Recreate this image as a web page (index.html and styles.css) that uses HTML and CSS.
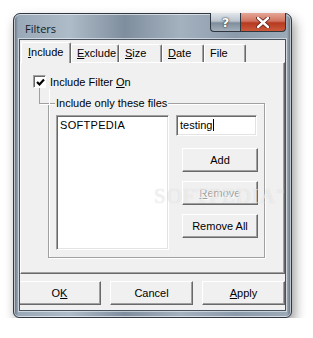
FILE: index.html
```html
<!DOCTYPE html>
<html lang="en">
<head>
    <meta charset="UTF-8">
    <title>Filters</title>
    <link rel="stylesheet" href="styles.css">
</head>
<body>
    <div class="window">
        <div class="titlebar">
            <div class="title">Filters</div>
            <div class="caption_btns">
                <div class="cap_btn help">?</div>
                <div class="cap_btn close">
                    <svg width="14" height="11" viewBox="0 0 14 11">
                        <path d="M2 1 L12 10 M12 1 L2 10" stroke="#5a1a10" stroke-width="4" stroke-linecap="round"/>
                        <path d="M2 1 L12 10 M12 1 L2 10" stroke="#fff" stroke-width="2.4" stroke-linecap="round"/>
                    </svg>
                </div>
            </div>
        </div>
        <div class="client">
            <div class="tabs">
                <div class="tab active" style="width: 50px"><u>I</u>nclude</div>
                <div class="tab" style="width: 48px"><u>E</u>xclude</div>
                <div class="tab" style="width: 43px"><u>S</u>ize</div>
                <div class="tab" style="width: 42px"><u>D</u>ate</div>
                <div class="tab" style="width: 42px">File</div>
            </div>
            <div class="tab_panel">
                <div class="check_row">
                    <span class="checkbox">
                        <svg width="9" height="9" viewBox="0 0 9 9">
                            <path d="M1 4 L3.5 6.5 L8 1.5" fill="none" stroke="#000" stroke-width="2.2"/>
                        </svg>
                    </span>
                    <span>Include Filter <u>O</u>n</span>
                </div>
                <div class="group">
                    <span class="group_label">Include only these files</span>
                    <div class="listbox">SOFTPEDIA</div>
                    <div class="side">
                        <div class="textbox">testing<span class="caret"></span></div>
                        <button class="btn side_btn" type="button">Add</button>
                        <button class="btn side_btn disabled" type="button"><u>R</u>emove</button>
                        <button class="btn side_btn" type="button">Remove All</button>
                    </div>
                </div>
            </div>
            <div class="bottom_btns">
                <button class="btn dlg_btn" type="button">O<u>K</u></button>
                <button class="btn dlg_btn" type="button">Cancel</button>
                <button class="btn dlg_btn" type="button"><u>A</u>pply</button>
            </div>
            <div class="watermark">SOFTPEDIA<sup>&trade;</sup></div>
        </div>
    </div>
</body>
</html>
```

FILE: styles.css
```css
body {
    margin: 0;
    background-color: #fff;
    font-family: "Liberation Sans", Arial, sans-serif;
    font-size: 11px;
    color: #000;
}
u {
    text-decoration: underline;
    text-underline-offset: 1px;
}

/* window frame */
.window {
    box-sizing: border-box;
    width: 279px;
    height: 305px;
    margin: 13px 0 0 13px;
    padding: 0 5px 6px 5px;
    border: 1px solid #2f3842;
    border-radius: 7px 7px 6px 6px;
    display: flex;
    flex-direction: column;
    background:
        linear-gradient(90deg, rgba(50, 62, 76, 0.6) 0px, rgba(50, 62, 76, 0) 4px, rgba(50, 62, 76, 0) calc(100% - 4px), rgba(50, 62, 76, 0.6) 100%),
        linear-gradient(90deg, #98a7b6 0%, #aebbc8 20%, #7f8e9e 40%, #a4b1bf 60%, #8c9bab 80%, #9dabb9 100%);
    box-shadow: 3px 6px 12px rgba(0, 0, 0, 0.4), inset 0 0 0 1px rgba(255, 255, 255, 0.6);
}
.titlebar {
    height: 25px;
    display: flex;
    align-items: flex-start;
}
.title {
    flex: 1;
    padding: 7px 0 0 6px;
    font-family: "Open Sans", sans-serif;
    font-size: 11px;
    color: #0f1c28;
}
.caption_btns {
    display: flex;
    margin-top: -1px;
}
.cap_btn {
    box-sizing: border-box;
    height: 19px;
    border: 1px solid #2e363f;
    border-top: 0;
    display: flex;
    align-items: center;
    justify-content: center;
}
.help {
    width: 30px;
    border-radius: 0 0 0 4px;
    border-right: 0;
    background: linear-gradient(180deg, #e1e6eb 0%, #bcc5ce 45%, #7f8d9b 55%, #a3afbb 100%);
    color: #fff;
    font-family: "DejaVu Sans", sans-serif;
    font-weight: bold;
    font-size: 13px;
    text-shadow: 0 0 2px #2b333b, 0 0 1px #2b333b;
}
.close {
    width: 46px;
    border-radius: 0 0 4px 0;
    background: linear-gradient(180deg, #e6a696 0%, #d07460 45%, #b63a20 55%, #cc5a3c 100%);
}

/* client area */
.client {
    position: relative;
    flex: 1;
    overflow: hidden;
    border: 1px solid #46525f;
    background-color: #f0f0f0;
    box-shadow: 0 0 0 1px rgba(255, 255, 255, 0.5);
}
.tabs {
    display: flex;
    height: 20px;
    margin-top: 2px;
    padding-left: 1px;
}
.tab {
    box-sizing: border-box;
    height: 18px;
    margin-top: 2px;
    padding: 2px 0 0 5px;
    border-top: 1px solid #fff;
    border-left: 1px solid #fff;
    border-right: 1px solid #696969;
    box-shadow: inset -1px 0 #a0a0a0;
    border-radius: 2px 2px 0 0;
}
.tab.active {
    position: relative;
    z-index: 1;
    height: 21px;
    margin-top: 0;
    padding: 3px 0 0 6px;
    background-color: #f0f0f0;
}
.tab_panel {
    box-sizing: border-box;
    height: 212px;
    padding: 12px 0 0 12px;
    border-top: 1px solid #fff;
    border-left: 1px solid #fff;
    border-right: 1px solid #696969;
    border-bottom: 1px solid #696969;
    box-shadow: inset -1px -1px #a0a0a0;
}
.check_row {
    display: flex;
    align-items: center;
    gap: 4px;
    height: 13px;
}
.checkbox {
    box-sizing: border-box;
    width: 13px;
    height: 13px;
    border-top: 1px solid #a0a0a0;
    border-left: 1px solid #a0a0a0;
    border-right: 1px solid #fff;
    border-bottom: 1px solid #fff;
    box-shadow: inset 1px 1px #696969;
    background-color: #fff;
    display: flex;
    align-items: center;
    justify-content: center;
    padding: 1px 0 0 1px;
}

/* group box */
.group {
    position: relative;
    box-sizing: border-box;
    width: 217px;
    height: 155px;
    margin: 15px 0 0 15px;
    padding: 11px 6px 0 7px;
    border: 1px solid #a0a0a0;
    box-shadow: inset 1px 1px #fff, 1px 1px #fff;
    display: flex;
    gap: 7px;
}
.group::before {
    content: "";
    position: absolute;
    left: -10px;
    top: -16px;
    width: 9px;
    height: 15px;
    border-left: 1px solid #a0a0a0;
    border-bottom: 1px solid #a0a0a0;
    box-shadow: 1px 1px #fff;
}
.group_label {
    position: absolute;
    left: 6px;
    top: -7px;
    padding: 0 1px;
    background-color: #f0f0f0;
    line-height: 13px;
}
.listbox {
    box-sizing: border-box;
    width: 113px;
    height: 135px;
    padding: 3px 3px;
    background-color: #fff;
    border-top: 1px solid #a0a0a0;
    border-left: 1px solid #a0a0a0;
    border-right: 1px solid #fff;
    border-bottom: 1px solid #fff;
    box-shadow: inset 1px 1px #696969, inset -1px -1px #e3e3e3;
    letter-spacing: 0.3px;
}
.side {
    width: 82px;
    display: flex;
    flex-direction: column;
    align-items: flex-end;
    gap: 9px;
}
.textbox {
    box-sizing: border-box;
    align-self: flex-start;
    width: 81px;
    height: 21px;
    padding: 3px 3px;
    background-color: #fff;
    border-top: 1px solid #a0a0a0;
    border-left: 1px solid #a0a0a0;
    border-right: 1px solid #fff;
    border-bottom: 1px solid #fff;
    box-shadow: inset 1px 1px #696969, inset -1px -1px #e3e3e3;
    margin-bottom: 3px;
}
.caret {
    display: inline-block;
    width: 1px;
    height: 12px;
    margin-left: 1px;
    vertical-align: -2px;
    background-color: #000;
}

/* buttons */
.btn {
    box-sizing: border-box;
    height: 24px;
    padding: 0;
    font-family: inherit;
    font-size: 11px;
    color: #000;
    background-color: #f0f0f0;
    border-top: 1px solid #fff;
    border-left: 1px solid #fff;
    border-right: 1px solid #696969;
    border-bottom: 1px solid #696969;
    box-shadow: inset -1px -1px #a0a0a0;
    border-radius: 0;
}
.side_btn {
    width: 76px;
}
.disabled {
    color: #a0a0a0;
    text-shadow: 1px 1px #fff;
}
.bottom_btns {
    display: flex;
    justify-content: flex-end;
    gap: 9px;
    margin-top: 7px;
}
.dlg_btn {
    flex-shrink: 0;
    width: 83px;
}

/* softpedia watermark, only shows on the grey face */
.watermark {
    position: absolute;
    left: 134px;
    top: 144px;
    font-family: "Liberation Serif", serif;
    font-size: 21px;
    line-height: 18px;
    letter-spacing: 1px;
    color: rgba(255, 255, 255, 0.6);
    text-shadow: 0 0 1px rgba(150, 150, 150, 0.4);
    pointer-events: none;
}
.watermark sup {
    font-size: 8px;
}
```
